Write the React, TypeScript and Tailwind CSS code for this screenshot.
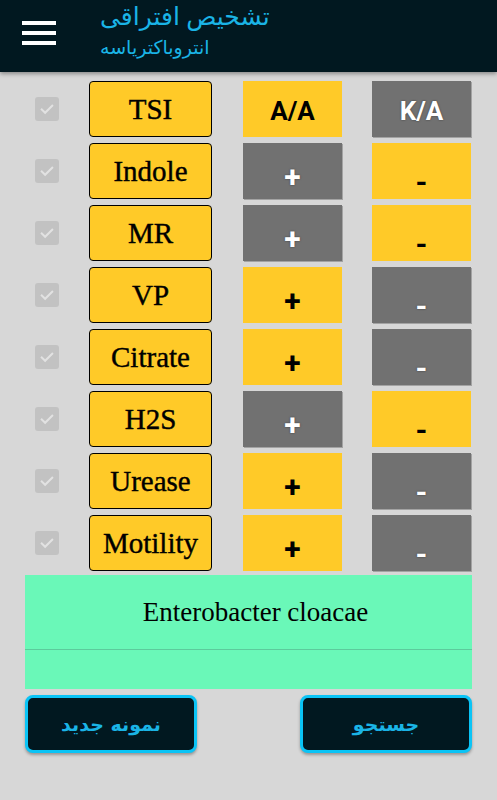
import React from "react";

type Cell = { label: string; on: boolean };

interface TestRow {
  name: string;
  pos: Cell;
  neg: Cell;
}

const rows: TestRow[] = [
  { name: "TSI", pos: { label: "A/A", on: true }, neg: { label: "K/A", on: false } },
  { name: "Indole", pos: { label: "+", on: false }, neg: { label: "-", on: true } },
  { name: "MR", pos: { label: "+", on: false }, neg: { label: "-", on: true } },
  { name: "VP", pos: { label: "+", on: true }, neg: { label: "-", on: false } },
  { name: "Citrate", pos: { label: "+", on: true }, neg: { label: "-", on: false } },
  { name: "H2S", pos: { label: "+", on: false }, neg: { label: "-", on: true } },
  { name: "Urease", pos: { label: "+", on: true }, neg: { label: "-", on: false } },
  { name: "Motility", pos: { label: "+", on: true }, neg: { label: "-", on: false } },
];

function CheckBox() {
  return (
    <div className="w-6 h-6 rounded-[3px] bg-[#c2c2c2] flex items-center justify-center">
      <svg viewBox="0 0 24 24" className="w-[18px] h-[18px]">
        <path
          d="M5 12.5l4.5 4.5L19 7.5"
          fill="none"
          stroke="#e2e2e2"
          strokeWidth={2.6}
          strokeLinecap="square"
        />
      </svg>
    </div>
  );
}

function ResultCell({ cell, big }: { cell: Cell; big: boolean }) {
  const isMinus = cell.label === "-";
  return (
    <div
      className={`w-[99px] h-14 flex justify-center font-bold font-['Roboto',sans-serif] leading-none ${
        cell.on
          ? "bg-[#ffca28] text-black"
          : "bg-[#717171] text-white shadow-[1px_1px_0_#a3a3a3] [text-shadow:0_0_2px_rgba(0,0,0,0.5)]"
      } ${
        big
          ? "items-center text-[26px] pt-1"
          : isMinus
          ? "items-center text-[30px] pt-[22px]"
          : "items-center text-[30px] pt-[12px]"
      }`}
    >
      {cell.label}
    </div>
  );
}

export default function App() {
  return (
    <div className="min-h-screen bg-[#d7d7d7] flex flex-col font-['Roboto','DejaVu_Sans',sans-serif]">
      <header className="h-[72px] bg-[#011820] flex items-start shadow-[0_2px_4px_rgba(0,0,0,0.35)] relative z-10">
        <button className="mt-[21px] ml-[22px] w-[34px] flex flex-col gap-[6.5px]">
          <span className="block h-[3.5px] bg-white" />
          <span className="block h-[3.5px] bg-white" />
          <span className="block h-[3.5px] bg-white" />
        </button>
        <div className="ml-[44px] flex flex-col items-start text-[#1ab4e6]">
          <h1 className="text-[25px] leading-[32px] mt-[1px]" dir="rtl">تشخیص افتراقی</h1>
          <p className="text-[19px] leading-[22px] mt-[4px]" dir="rtl">انتروباکتریاسه</p>
        </div>
      </header>

      <main className="flex flex-col pt-[9px]">
        <div className="flex flex-col gap-[6px]">
          {rows.map((r) => (
            <div key={r.name} className="flex items-center h-14 pl-[35px]">
              <CheckBox />
              <button className="ml-[30px] w-[123px] h-14 rounded-[4px] border border-black bg-[#ffca28] text-black text-[29px] font-['Liberation_Serif',serif] leading-none flex items-center justify-center [-webkit-text-stroke:0.4px_black]">
                {r.name}
              </button>
              <div className="ml-[31px]">
                <ResultCell cell={r.pos} big={r.name === "TSI"} />
              </div>
              <div className="ml-[30px]">
                <ResultCell cell={r.neg} big={r.name === "TSI"} />
              </div>
            </div>
          ))}
        </div>

        <section className="mt-1 mx-[25px] w-[447px] h-[114px] bg-[#6af8b8] flex flex-col">
          <div className="h-[75px] pl-[14px] border-b border-[#5ccb9c] flex items-center justify-center font-['Liberation_Serif',serif] text-[27px] text-black">
            Enterobacter cloacae
          </div>
        </section>

        <div className="mt-[6px] mx-[25px] w-[447px] flex justify-between">
          <button className="w-[172px] h-[58px] rounded-[8px] bg-[#011820] border-[3px] border-[#0ac4f6] text-[#1ab4e6] font-bold text-[19px] shadow-[0_2px_3px_rgba(0,0,0,0.3)] font-['DejaVu_Sans',sans-serif]" dir="rtl">
            نمونه جدید
          </button>
          <button className="w-[172px] h-[58px] rounded-[8px] bg-[#011820] border-[3px] border-[#0ac4f6] text-[#1ab4e6] font-bold text-[19px] shadow-[0_2px_3px_rgba(0,0,0,0.3)] font-['DejaVu_Sans',sans-serif]" dir="rtl">
            جستجو
          </button>
        </div>
      </main>
    </div>
  );
}
